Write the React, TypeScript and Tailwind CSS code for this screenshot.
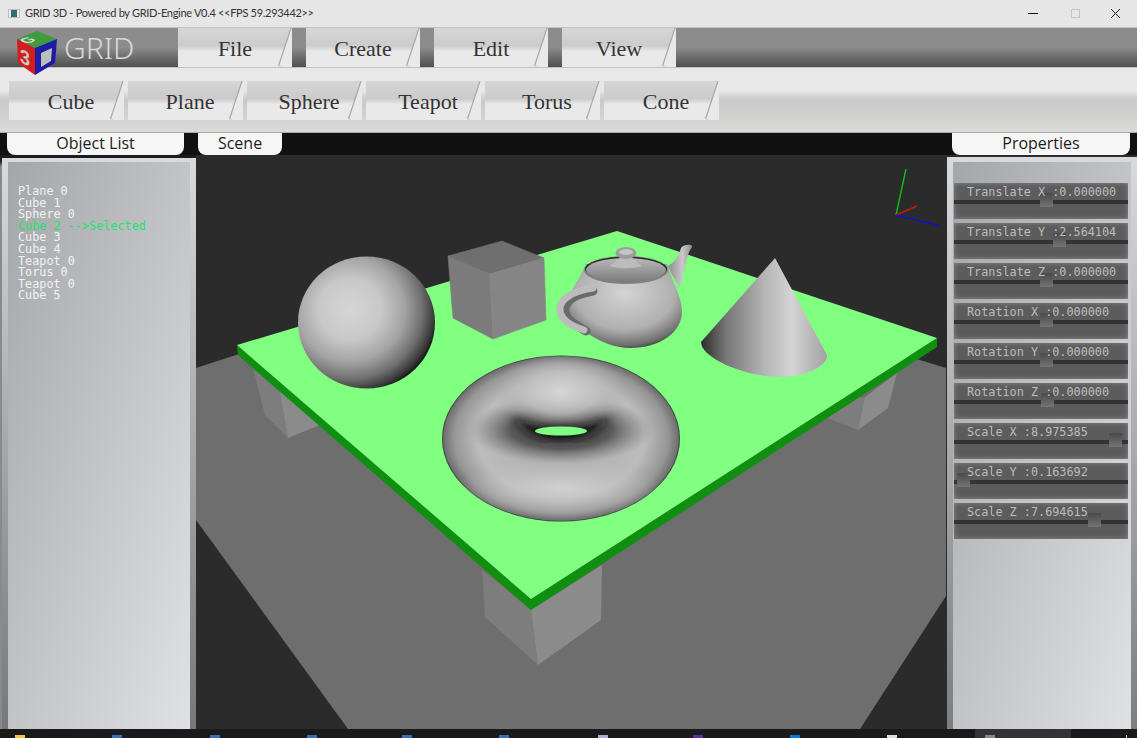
const menu = ['File', 'Create', 'Edit', 'View'];
const tools = ['Cube', 'Plane', 'Sphere', 'Teapot', 'Torus', 'Cone'];
const objects = ['Plane 0', 'Cube 1', 'Sphere 0', 'Cube 2 -->Selected', 'Cube 3', 'Cube 4', 'Teapot 0', 'Torus 0', 'Teapot 0', 'Cube 5'];
const sliders = [
  ['Translate X :0.000000', 86],
  ['Translate Y :2.564104', 99],
  ['Translate Z :0.000000', 86],
  ['Rotation X :0.000000', 86],
  ['Rotation Y :0.000000', 86],
  ['Rotation Z :0.000000', 87],
  ['Scale X :8.975385', 155],
  ['Scale Y :0.163692', 3],
  ['Scale Z :7.694615', 134],
] as const;
const taskIcons = [
  ['#f5c542', 20], ['#3a6fb5', 117], ['#3a6fb5', 215], ['#3a6fb5', 312], ['#3a6fb5', 407], ['#3a6fb5', 504],
  ['#b9a6d8', 603], ['#5b2da8', 698], ['#0a78d7', 795], ['#dddddd', 892], ['#8a8a8a', 990],
] as const;

function Slash() {
  return (
    <svg className="absolute right-0 top-0 h-full w-[15px]" viewBox="0 0 15 40" preserveAspectRatio="none">
      <polygon points="14.5,0 15,0 15,40 2,40" fill="#e9e9e9" />
      <line x1="14" y1="0" x2="1.5" y2="39" stroke="#a9a9a9" strokeWidth="1.2" />
      <line x1="2" y1="39.6" x2="4" y2="39.6" stroke="#a8dcb8" strokeWidth="0.8" />
    </svg>
  );
}

function Logo() {
  return (
    <svg width="44" height="48" viewBox="15 28 44 48" className="absolute left-[15px] top-[1px]">
      <polygon points="17,38 37,30 57,38 35,47" fill="#3e9c3e" />
      <polygon points="17,38 35,47 35,74 18,62" fill="#d41c1c" />
      <polygon points="35,47 57,38 55,62 35,74" fill="#1c1ca6" />
      <polygon points="41,52 52,47 51,60 41,66" fill="#bcc0bc" />
      <text x="0" y="0" fontFamily="'Liberation Sans', sans-serif" fontSize="13" fontWeight="700" fill="#d8d8d8" transform="matrix(1,-0.38,1,0.42,27,43)">G</text>
      <text x="0" y="0" fontFamily="'Liberation Sans', sans-serif" fontSize="20" fontWeight="700" fill="#c9c9c9" transform="matrix(0.9,0.45,0,1,20,61)">3</text>
    </svg>
  );
}

function Scene() {
  return (
    <svg width="750" height="574" viewBox="196 155 750 574" className="block shrink-0">
      <defs>
        <radialGradient id="sph" cx="0.38" cy="0.4" r="0.66">
          <stop offset="0" stopColor="#d6d6d6" />
          <stop offset="0.35" stopColor="#c8c8c8" />
          <stop offset="0.6" stopColor="#a4a4a4" />
          <stop offset="0.8" stopColor="#707070" />
          <stop offset="0.93" stopColor="#3a3a3a" />
          <stop offset="1" stopColor="#101010" />
        </radialGradient>
        <radialGradient id="tor" cx="0.5" cy="0.5" r="0.5">
          <stop offset="0" stopColor="#a8a8a8" />
          <stop offset="0.7" stopColor="#bcbcbc" />
          <stop offset="0.9" stopColor="#969696" />
          <stop offset="0.985" stopColor="#707070" />
          <stop offset="1" stopColor="#333333" />
        </radialGradient>
        <radialGradient id="torDark" cx="0.5" cy="0.5" r="0.5">
          <stop offset="0" stopColor="#2a2a2a" />
          <stop offset="0.55" stopColor="#4a4a4a" stopOpacity="0.85" />
          <stop offset="1" stopColor="#777777" stopOpacity="0" />
        </radialGradient>
        <radialGradient id="torLight" cx="0.5" cy="0.5" r="0.5">
          <stop offset="0" stopColor="#d6d6d6" />
          <stop offset="0.55" stopColor="#c0c0c0" stopOpacity="0.85" />
          <stop offset="1" stopColor="#aaaaaa" stopOpacity="0" />
        </radialGradient>
        <radialGradient id="torLow" cx="0.5" cy="0.5" r="0.5">
          <stop offset="0" stopColor="#d2d2d2" />
          <stop offset="1" stopColor="#bdbdbd" stopOpacity="0" />
        </radialGradient>
        <linearGradient id="cone" x1="0" y1="0" x2="1" y2="0">
          <stop offset="0" stopColor="#2c2c2c" />
          <stop offset="0.2" stopColor="#777777" />
          <stop offset="0.5" stopColor="#b4b4b4" />
          <stop offset="0.72" stopColor="#d4d4d4" />
          <stop offset="1" stopColor="#a2a2a2" />
        </linearGradient>
        <radialGradient id="pot" cx="0.5" cy="0.35" r="0.72">
          <stop offset="0" stopColor="#d4d4d4" />
          <stop offset="0.6" stopColor="#b0b0b0" />
          <stop offset="0.85" stopColor="#707070" />
          <stop offset="1" stopColor="#1a1a1a" />
        </radialGradient>
        <linearGradient id="lid" x1="0" y1="0" x2="0" y2="1">
          <stop offset="0" stopColor="#b8b8b8" />
          <stop offset="1" stopColor="#7c7c7c" />
        </linearGradient>
        <linearGradient id="spout" x1="0" y1="0" x2="1" y2="0">
          <stop offset="0" stopColor="#8d8d8d" />
          <stop offset="0.6" stopColor="#c9c9c9" />
          <stop offset="1" stopColor="#8d8d8d" />
        </linearGradient>
        <filter id="b4"><feGaussianBlur stdDeviation="5" /></filter>
        <filter id="b1"><feGaussianBlur stdDeviation="1.2" /></filter>
        <clipPath id="torClip"><ellipse cx="561" cy="438.5" rx="119" ry="83" /></clipPath>
      </defs>
      <rect x="196" y="155" width="750" height="574" fill="#2b2b2b" />
      <polygon points="196,368 560,250 946,368 946,596 860,729 348,729 196,520" fill="#6e6e6e" />
      <polygon points="253,368 265,415 288,438 280,392" fill="#7d7d7d" />
      <polygon points="280,392 288,438 320,425 320,400" fill="#8b8b8b" />
      <polygon points="827,418 858,430 865,397 840,400" fill="#7d7d7d" />
      <polygon points="865,397 858,430 888,408 897,373" fill="#8b8b8b" />
      <polygon points="482,570 485,617 538,665 531,610" fill="#7d7d7d" />
      <polygon points="531,610 538,665 601,620 602,565" fill="#8b8b8b" />
      <polygon points="237,345 531,599 937,338 937,347 531,610 238,355" fill="#0f8f0f" />
      <polygon points="237,345 617,231 937,338 531,599" fill="#80ff80" />

      <polygon points="448,256 502,241 544,258 490,274" fill="#6f6f6f" stroke="#6f6f6f" strokeWidth="0.6" />
      <polygon points="448,256 490,274 493,339 453,318" fill="#7b7b7b" stroke="#7b7b7b" strokeWidth="0.6" />
      <polygon points="490,274 544,258 546,320 493,339" fill="#858585" stroke="#858585" strokeWidth="0.6" />

      <ellipse cx="366.5" cy="322.5" rx="68.5" ry="66" fill="url(#sph)" />

      <path d="M668,266 C675,262 679,255 681,248 C684,244 693,244 692,247 C686,255 685,270 680,288 C675,280 670,272 668,266 Z" fill="url(#spout)" />
      <path d="M586,264 C580,278 572,288 568,300 C564,322 600,348 630,348 C660,348 682,332 682,312 C682,296 672,282 667,264 Z" fill="url(#pot)" />
      <path d="M593,291 C576,294 565,300 565,310 C565,320 576,325 586,331" fill="none" stroke="#6a6a6a" strokeWidth="9" strokeLinecap="round" />
      <path d="M593,288 C571,291 560,300 560,309 C560,320 571,326 584,330" fill="none" stroke="#bcbcbc" strokeWidth="7" strokeLinecap="round" />
      <ellipse cx="626" cy="270" rx="42" ry="14" fill="#808080" />
      <ellipse cx="626" cy="269" rx="41" ry="12.5" fill="#2a2a2a" />
      <ellipse cx="626" cy="270" rx="40" ry="12" fill="url(#lid)" />
      <path d="M620,258 C624,256 628,256 632,258 L642,266 C632,269 620,269 610,266 Z" fill="#bcbcbc" />
      <ellipse cx="626" cy="253" rx="10.5" ry="6" fill="#9c9c9c" />
      <ellipse cx="626" cy="252" rx="7" ry="3" fill="#c4c4c4" />

      <path d="M775,258 L827,355 C828,366 805,377 780,377 C745,377 701,358 701,342 Z" fill="url(#cone)" />

      <ellipse cx="561" cy="438.5" rx="119" ry="83" fill="url(#tor)" />
      <g clipPath="url(#torClip)">
        <ellipse cx="561" cy="488" rx="105" ry="30" fill="url(#torLow)" />
        <ellipse cx="561" cy="430" rx="92" ry="34" fill="url(#torDark)" />
        <ellipse cx="561" cy="392" rx="66" ry="38" fill="url(#torLight)" />
        <path d="M510,414 C522,432 540,440 561,440 C582,440 600,432 612,414 C602,424 584,429 561,429 C538,429 520,424 510,414 Z" fill="#151515" filter="url(#b4)" />
        <path d="M522,422 C532,432 545,436 561,436 C577,436 590,432 600,422 C590,430 577,433 561,433 C545,433 532,430 522,422 Z" fill="#111111" opacity="0.8" filter="url(#b1)" />
      </g>
      <ellipse cx="561" cy="431" rx="26" ry="4.5" fill="#80ff80" />

      <line x1="896" y1="215" x2="906" y2="169" stroke="#11c011" strokeWidth="1.4" />
      <line x1="896" y1="215" x2="917" y2="206" stroke="#c01818" strokeWidth="1.4" />
      <line x1="896" y1="215" x2="941" y2="226" stroke="#1212c8" strokeWidth="1.4" />
    </svg>
  );
}

export default function App() {
  return (
    <div className="flex h-[738px] w-[1137px] flex-col overflow-hidden bg-[#111111]">
      <div className="flex h-[27px] shrink-0 items-center bg-[#e6e6e6] pl-[8px]" style={{ fontFamily: "Lato, sans-serif" }}>
        <div className="mr-[5px] flex h-[9px] w-[12px] items-center justify-center border border-[#b8bcbc] bg-[#e8eeee]">
          <div className="h-[7px] w-[6px] bg-[#2d6f6a]" />
        </div>
        <span className="text-[11px] tracking-[-0.3px] text-[#333333]">GRID 3D - Powered by GRID-Engine V0.4 &lt;&lt;FPS 59.293442&gt;&gt;</span>
        <div className="ml-auto flex items-center">
          <div className="mr-[33px] h-px w-[10px] bg-[#111111]" />
          <div className="mr-[30px] h-[9px] w-[9px] border border-[#c4c4c4]" />
          <svg width="11" height="11" viewBox="0 0 11 11" className="mr-[16px]">
            <path d="M1 1 L10 10 M10 1 L1 10" stroke="#222222" strokeWidth="1" />
          </svg>
        </div>
      </div>

      <div className="relative flex h-[41px] shrink-0 border-t border-b border-[#c2c2c2] bg-linear-to-b from-[#8c8c8c] from-50% to-[#4f4f4f]">
        <div className="relative h-full w-[178px] shrink-0">
          <Logo />
          <span className="absolute left-[64px] top-[2px] text-[30px] font-light leading-[36px] text-[#d8d8d8]" style={{ fontFamily: "'Noto Sans', sans-serif" }}>GRID</span>
        </div>
        {menu.map((m) => (
          <div key={m} className="relative mr-[14px] flex h-full w-[114px] shrink-0 items-center justify-center bg-linear-to-b from-[#d6d6d6] via-[#cccccc] via-45% to-[#e9e9e9] to-60% pt-[2px] text-[22px] text-[#333333]" style={{ fontFamily: "'Liberation Serif', serif" }}>
            <span>{m}</span>
            <Slash />
          </div>
        ))}
      </div>

      <div className="flex h-[65px] shrink-0 gap-[4px] border-b border-[#a8a8a8] bg-linear-to-b from-[#e8e8e8] from-35% via-[#c9c9c9] via-50% to-[#dadad8] pl-[9px] pt-[13px]">
        {tools.map((t) => (
          <div key={t} className="relative flex h-[39px] w-[115px] items-center justify-center bg-linear-to-b from-[#d6d6d6] via-[#cbcbcb] via-45% to-[#e9e9e9] to-60% pl-[9px] pt-[2px] text-[22px] text-[#333333]" style={{ fontFamily: "'Liberation Serif', serif" }}>
            <span>{t}</span>
            <Slash />
          </div>
        ))}
      </div>

      <div className="flex h-[22px] shrink-0 bg-[#111111] pl-[7px] text-[16px] font-medium text-[#1c1c1c]" style={{ fontFamily: "'Open Sans', sans-serif" }}>
        <div className="flex w-[177px] items-center justify-center rounded-b-lg bg-[#f7f6f7] pb-[2px] leading-none">Object List</div>
        <div className="ml-[14px] flex w-[84px] items-center justify-center rounded-b-lg bg-[#f7f6f7] pb-[2px] leading-none">Scene</div>
        <div className="ml-[670px] flex w-[178px] items-center justify-center rounded-b-lg bg-[#f7f6f7] pb-[2px] leading-none">Properties</div>
      </div>

      <div className="flex min-h-0 flex-1">
        <div className="w-[196px] shrink-0 bg-linear-to-b from-[#1c1c1c] from-1% to-[#8a8a8a] to-2% pl-[2px] pt-[3px]">
          <div className="h-full bg-linear-to-b from-[#d8dadd] to-[#76787a] pl-[6px] pr-[6px] pt-[4px]">
            <div className="h-full bg-linear-to-br from-[#a4a7aa] to-[#e0e1e4] pl-[10px] pt-[24px] text-[11.8px] leading-[11.6px] text-[#f2f2f2]" style={{ fontFamily: "'DejaVu Sans Mono', monospace" }}>
              {objects.map((o, i) => (
                <div key={i} className={i === 3 ? 'text-[#22e36c]' : ''}>{o}</div>
              ))}
            </div>
          </div>
        </div>

        <Scene />

        <div className="flex-1 bg-[#2b2b2b] pl-px pt-[2px]">
          <div className="h-full bg-linear-to-b from-[#d8dadd] to-[#7c7e80] pl-[6px] pr-[6px] pt-[5px]">
            <div className="flex h-full flex-col gap-[4px] bg-linear-to-br from-[#a4a7aa] to-[#e0e1e4] pl-px pr-[3px] pt-[21px]" style={{ fontFamily: "'DejaVu Sans Mono', monospace" }}>
              {sliders.map(([label, knob]) => (
                <div key={label} className="relative h-[36px] shrink-0 bg-[#5c5c5c] shadow-[inset_0_0_5px_#8a8a8a]">
                  <div className="relative z-10 h-[17px] pl-[13px] pt-[3px] text-[11.8px] leading-[13px] text-[#bdbdbd] whitespace-nowrap">{label}</div>
                  <div className="h-[4px] bg-[#333333]" />
                  <div className="absolute top-[10px] h-[14px] w-[13px] bg-linear-to-b from-[#4a4a4a] to-[#757575]" style={{ left: knob }} />
                </div>
              ))}
            </div>
          </div>
        </div>
      </div>

      <div className="relative h-[9px] shrink-0 bg-[#1a1a1a]">
        <div className="absolute left-[975px] top-0 h-full w-[96px] bg-[#333333]" />
        {taskIcons.map(([c, x]) => (
          <div key={x} className="absolute top-[6px] h-[3px] w-[10px]" style={{ background: c, left: x - 5 }} />
        ))}
        <div className="absolute left-[1126px] top-[6px] h-[3px] w-px bg-[#dddddd]" />
      </div>
    </div>
  );
}
